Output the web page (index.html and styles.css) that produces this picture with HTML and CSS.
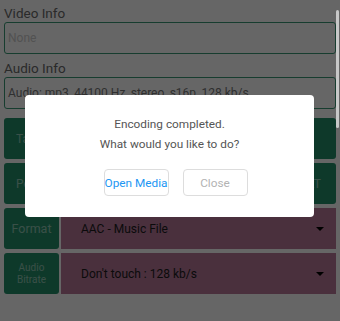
FILE: index.html
```html
<!DOCTYPE html>
<html>
<head>
<meta charset="utf-8">
<link rel="stylesheet" href="styles.css">
</head>
<body>
<div class="page">
  <label class="lbl">Video Info</label>
  <div class="field empty">None</div>
  <label class="lbl lbl-gap">Audio Info</label>
  <div class="field">Audio: mp3, 44100 Hz, stereo, s16p, 128 kb/s</div>
  <div class="rows">
    <div class="row">
      <div class="gbtn wide">Tap here to choose a media file</div>
    </div>
    <div class="row">
      <div class="gbtn wide split"><span>Peak normalize</span><span>CONVERT</span></div>
    </div>
    <div class="row">
      <div class="optlabel">Format</div>
      <div class="select"><span>AAC - Music File</span><span class="caret"></span></div>
    </div>
    <div class="row">
      <div class="optlabel small">Audio<br>Bitrate</div>
      <div class="select"><span>Don't touch : 128 kb/s</span><span class="caret"></span></div>
    </div>
  </div>
</div>
<div class="overlay">
  <div class="dialog">
    <p class="msg">Encoding completed.</p>
    <p class="msg">What would you like to do?</p>
    <div class="actions">
      <div class="dbtn primary">Open Media</div>
      <div class="dbtn muted">Close</div>
    </div>
  </div>
</div>
<div class="scrollbar"></div>
</body>
</html>
```
FILE: styles.css
```css
html, body {
  margin: 0;
  padding: 0;
}
body {
  width: 340px;
  height: 321px;
  overflow: hidden;
  background: #ffffff;
  font-family: Roboto, "Noto Sans", sans-serif;
}
.page {
  padding: 4px 4px 0 4px;
}
.lbl {
  display: block;
  font-size: 13.5px;
  line-height: 18px;
  color: #6a6a6a;
}
.lbl-gap {
  margin-top: 5px;
}
.field {
  box-sizing: border-box;
  height: 32px;
  border: 1.5px solid #3a9a76;
  border-radius: 3px;
  padding: 0 3px;
  display: flex;
  align-items: center;
  font-size: 12px;
  color: #777777;
  white-space: nowrap;
  overflow: hidden;
}
.field.empty {
  color: #cccccc;
}
.rows {
  margin-top: 9px;
  display: flex;
  flex-direction: column;
  gap: 4px;
}
.row {
  display: flex;
  gap: 2px;
  height: 41px;
}
.gbtn {
  background: #238f6a;
  border-radius: 3px;
  color: rgba(255, 255, 255, 0.5);
  font-size: 12px;
  display: flex;
  align-items: center;
  padding: 0 12px;
}
.gbtn.wide {
  flex: 1;
}
.gbtn.split {
  justify-content: space-between;
  padding-right: 15px;
}
.optlabel {
  width: 55px;
  flex: none;
  background: #238f6a;
  border-radius: 3px;
  color: rgba(255, 255, 255, 0.5);
  font-size: 12.5px;
  display: flex;
  align-items: center;
  justify-content: center;
  text-align: center;
}
.optlabel.small {
  font-size: 10px;
  line-height: 12px;
}
.select {
  flex: 1;
  background: #b8789a;
  display: flex;
  align-items: center;
  justify-content: space-between;
  padding: 0 12px 0 20px;
  font-size: 12px;
  color: #1c1c1c;
}
.caret {
  width: 0;
  height: 0;
  border-left: 4px solid transparent;
  border-right: 4px solid transparent;
  border-top: 4px solid #000000;
}
.overlay {
  position: fixed;
  inset: 0;
  background: rgba(0, 0, 0, 0.6);
  display: flex;
  align-items: flex-start;
  padding: 95px 0 0 25px;
}
.dialog {
  width: 289px;
  height: 122px;
  box-sizing: border-box;
  background: #ffffff;
  border-radius: 4px;
  padding-top: 19px;
  text-align: center;
}
.msg {
  margin: 0;
  font-size: 11.8px;
  line-height: 20px;
  color: #555555;
}
.actions {
  margin-top: 15px;
  padding-left: 12px;
  display: flex;
  justify-content: center;
  gap: 14px;
}
.dbtn {
  box-sizing: border-box;
  width: 65px;
  height: 27px;
  border: 1px solid #dddddd;
  border-radius: 4px;
  display: flex;
  align-items: center;
  justify-content: center;
  font-size: 11.8px;
  white-space: nowrap;
}
.dbtn.primary {
  color: #2196f3;
}
.dbtn.muted {
  color: #b3b3b3;
}
.scrollbar {
  position: fixed;
  left: 336px;
  top: 10px;
  width: 3px;
  height: 118px;
  background: #c8c8c8;
  border-radius: 2px;
}
```
